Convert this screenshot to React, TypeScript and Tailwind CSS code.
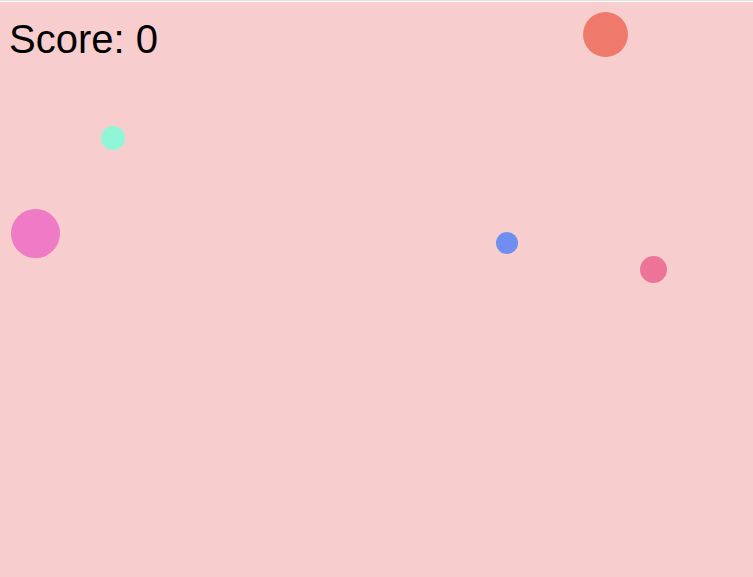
const balls = [
  { x: 605.5, y: 34, d: 45, color: "#ef7a6c" },
  { x: 113, y: 137.5, d: 24, color: "#8ff7d8" },
  { x: 35.5, y: 233, d: 49, color: "#ef7ac6" },
  { x: 507, y: 243, d: 22, color: "#6f8ef0" },
  { x: 653, y: 269, d: 27, color: "#ec7499" },
]

export default function App() {
  return (
    <div className="h-[577px] w-[753px] overflow-hidden bg-white">
      <div className="h-px bg-[#e2e2e2]" />
      <div className="h-px bg-white" />
      <div className="relative h-[575px] w-full bg-[#f8cdcd]">
        <div className="px-[9px] pt-[17px] text-[40px] leading-[40px] text-black" style={{ fontFamily: '"Liberation Sans", Arial, sans-serif' }}>
          Score: 0
        </div>
        {balls.map((b, i) => (
          <div
            key={i}
            className="absolute rounded-full"
            style={{
              left: b.x - b.d / 2,
              top: b.y - 2 - b.d / 2,
              width: b.d,
              height: b.d,
              backgroundColor: b.color,
            }}
          />
        ))}
      </div>
    </div>
  )
}
